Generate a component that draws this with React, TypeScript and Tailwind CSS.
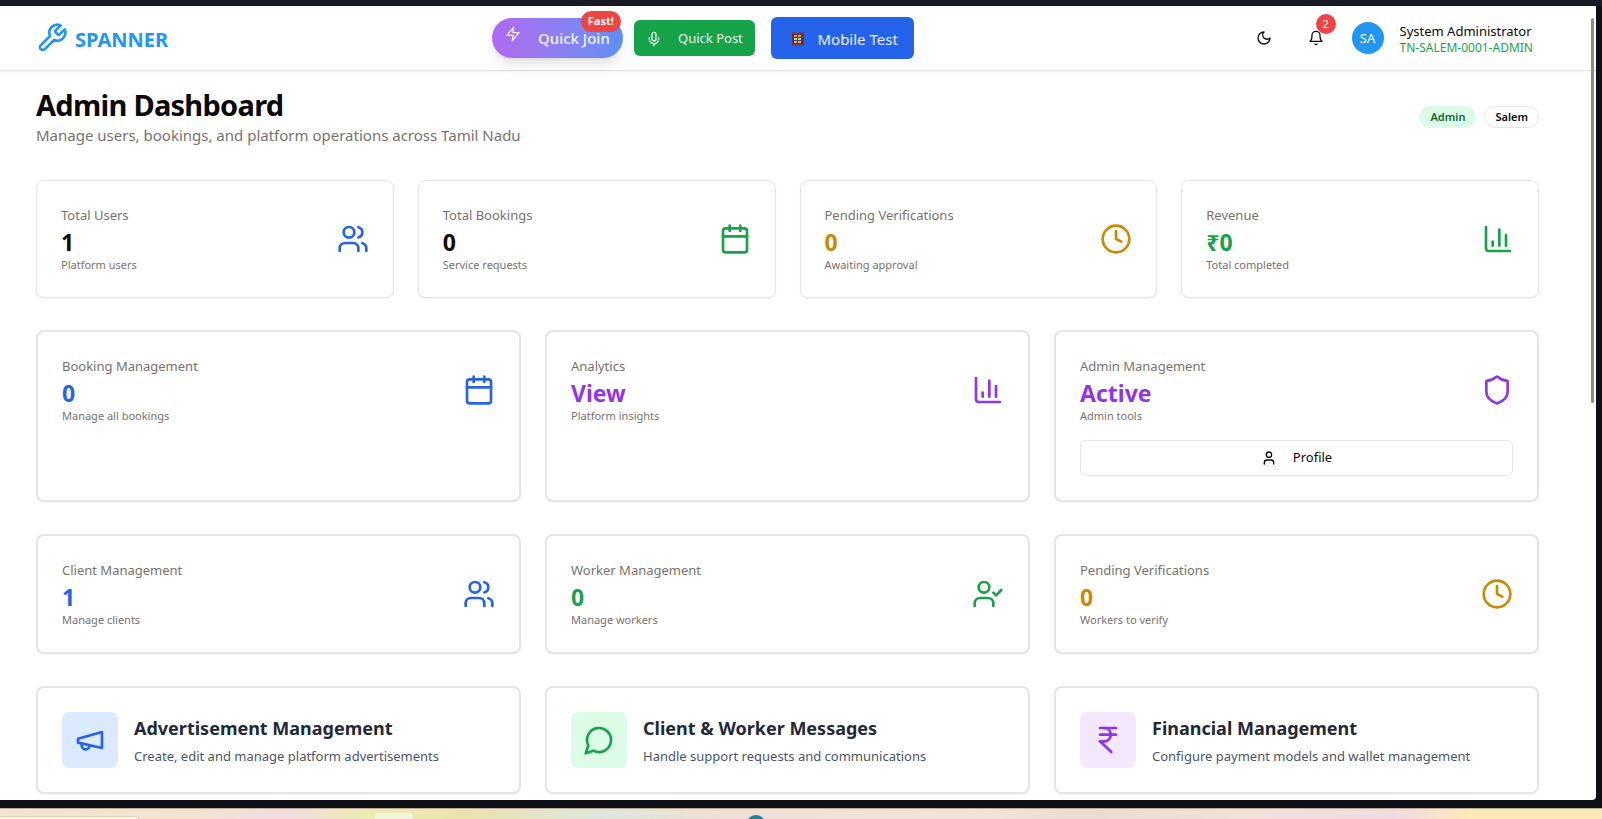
import React from "react";
import type { ReactNode } from "react";
import { Calendar, ChartColumn, Clock, IndianRupee, Mic, Shield, User, UserCheck, Users } from "lucide-react";

type IconProps = { className?: string };
type IconType = React.ComponentType<IconProps>;

type Stat = {
  label: string;
  value: string;
  note: string;
  icon: IconType;
  valueClass: string;
  iconClass: string;
  action?: string;
};

function Stroke({ className, children }: IconProps & { children: ReactNode }) {
  return (
    <svg
      className={className}
      viewBox="0 0 24 24"
      fill="none"
      stroke="currentColor"
      strokeWidth="2"
      strokeLinecap="round"
      strokeLinejoin="round"
      aria-hidden="true"
    >
      {children}
    </svg>
  );
}

function Wrench({ className }: IconProps) {
  return (
    <Stroke className={className}>
      <path d="M14.7 6.3a1 1 0 0 0 0 1.4l1.6 1.6a1 1 0 0 0 1.4 0l3.77-3.77a6 6 0 0 1-7.94 7.94l-6.91 6.91a2.12 2.12 0 0 1-3-3l6.91-6.91a6 6 0 0 1 7.94-7.94l-3.76 3.76z" />
    </Stroke>
  );
}

function Zap({ className }: IconProps) {
  return (
    <Stroke className={className}>
      <polygon points="13 2 3 14 12 14 11 22 21 10 12 10 13 2" />
    </Stroke>
  );
}

function Moon({ className }: IconProps) {
  return (
    <Stroke className={className}>
      <path d="M12 3a6 6 0 0 0 9 9 9 9 0 1 1-9-9Z" />
    </Stroke>
  );
}

function Bell({ className }: IconProps) {
  return (
    <Stroke className={className}>
      <path d="M6 8a6 6 0 0 1 12 0c0 7 3 9 3 9H3s3-2 3-9" />
      <path d="M10.3 21a1.94 1.94 0 0 0 3.4 0" />
    </Stroke>
  );
}

function Megaphone({ className }: IconProps) {
  return (
    <Stroke className={className}>
      <path d="m3 11 18-5v12L3 14v-3z" />
      <path d="M11.6 16.8a3 3 0 1 1-5.8-1.6" />
    </Stroke>
  );
}

function MessageCircle({ className }: IconProps) {
  return (
    <Stroke className={className}>
      <path d="M7.9 20A9 9 0 1 0 4 16.1L2 22Z" />
    </Stroke>
  );
}

function Abacus() {
  return (
    <svg className="ml-1 h-4 w-3.5" viewBox="0 0 14 16" aria-hidden="true">
      <rect x="2" y="2" width="10" height="12" fill="#4a3a6a" />
      <path d="M2 1v14M12 1v14" stroke="#5b2f4a" strokeWidth="2" />
      <path d="M1 2h12M1 14h12" stroke="#8a3a45" strokeWidth="1.5" />
      <g strokeWidth="2" strokeDasharray="3 1">
        <path d="M3 5h8" stroke="#f08a4b" />
        <path d="M3 8h8" stroke="#e8c75a" />
        <path d="M3 11h8" stroke="#e8a05a" />
      </g>
      <path d="M7 5h2M4 11h2" stroke="#6fc6d8" strokeWidth="2" />
    </svg>
  );
}

const totals: Stat[] = [
  { label: "Total Users", value: "1", note: "Platform users", icon: Users, valueClass: "text-[#0c0a09]", iconClass: "text-[#2563eb]" },
  { label: "Total Bookings", value: "0", note: "Service requests", icon: Calendar, valueClass: "text-[#0c0a09]", iconClass: "text-[#16a34a]" },
  { label: "Pending Verifications", value: "0", note: "Awaiting approval", icon: Clock, valueClass: "text-[#ca8a04]", iconClass: "text-[#ca8a04]" },
  { label: "Revenue", value: "₹0", note: "Total completed", icon: ChartColumn, valueClass: "text-[#16a34a]", iconClass: "text-[#16a34a]" },
];

const management: Stat[] = [
  { label: "Booking Management", value: "0", note: "Manage all bookings", icon: Calendar, valueClass: "text-[#2563eb]", iconClass: "text-[#2563eb]" },
  { label: "Analytics", value: "View", note: "Platform insights", icon: ChartColumn, valueClass: "text-[#9333ea]", iconClass: "text-[#9333ea]" },
  { label: "Admin Management", value: "Active", note: "Admin tools", icon: Shield, valueClass: "text-[#9333ea]", iconClass: "text-[#9333ea]", action: "Profile" },
];

const people: Stat[] = [
  { label: "Client Management", value: "1", note: "Manage clients", icon: Users, valueClass: "text-[#2563eb]", iconClass: "text-[#2563eb]" },
  { label: "Worker Management", value: "0", note: "Manage workers", icon: UserCheck, valueClass: "text-[#16a34a]", iconClass: "text-[#16a34a]" },
  { label: "Pending Verifications", value: "0", note: "Workers to verify", icon: Clock, valueClass: "text-[#ca8a04]", iconClass: "text-[#ca8a04]" },
];

const tools = [
  { title: "Advertisement Management", text: "Create, edit and manage platform advertisements", icon: Megaphone, tile: "bg-[#dbeafe] text-[#2563eb]" },
  { title: "Client & Worker Messages", text: "Handle support requests and communications", icon: MessageCircle, tile: "bg-[#dcfce7] text-[#16a34a]" },
  { title: "Financial Management", text: "Configure payment models and wallet management", icon: IndianRupee, tile: "bg-[#f3e8ff] text-[#9333ea]" },
];

function StatCard({ stat, frame }: { stat: Stat; frame: string }) {
  const Icon = stat.icon;
  return (
    <article className={`rounded-lg border-[#e5e5e5] bg-white p-6 shadow-xs ${frame}`}>
      <div className="flex items-center justify-between">
        <div>
          <p className="text-[13px] leading-5 text-[#78716c]">{stat.label}</p>
          <p className={`pt-0.5 text-[23px] leading-[30px] font-bold ${stat.valueClass}`}>{stat.value}</p>
          <p className="text-[11px] leading-4 text-[#78716c]">{stat.note}</p>
        </div>
        <Icon className={`size-8 ${stat.iconClass}`} aria-hidden="true" />
      </div>
      {stat.action && (
        <button className="mt-4 flex h-9 w-full items-center justify-center gap-4 rounded-md border border-[#e5e5e5] text-[13px] text-[#0c0a09]">
          <User className="size-4" aria-hidden="true" />
          {stat.action}
        </button>
      )}
    </article>
  );
}

function Header() {
  return (
    <header className="flex h-[65px] items-center justify-between border-b border-[#e5e5e5] pr-[63px] pl-9 shadow-xs">
      <a href="#home" className="flex items-center gap-[7px] text-xl font-bold text-[#2196f3]">
        <Wrench className="size-8" />
        <span className="pt-1">SPANNER</span>
      </a>

      <nav className="flex items-center" aria-label="Quick actions">
        <button className="relative flex h-10 w-[131px] items-center justify-between rounded-full bg-linear-to-r from-[#b069f0] to-[#5b90f4] px-[13px] text-[15px] font-medium text-white/90 shadow-lg">
          <Zap className="mb-2 size-4" />
          Quick Join
          <span className="absolute -top-[7px] right-0.5 flex h-[21px] items-center rounded-full bg-[#ef4444] px-[7px] text-[11px] font-bold text-white">
            Fast!
          </span>
        </button>
        <button className="ml-[11px] flex h-9 w-[121px] items-center justify-between rounded-md bg-[#16a34a] px-3 pt-0.5 text-[13px] text-white/90">
          <Mic className="size-4" aria-hidden="true" />
          Quick Post
        </button>
        <button className="ml-4 flex h-[42px] w-[143px] items-center justify-between rounded-md bg-[#2563eb] px-4 pt-0.5 text-[15px] text-white/90">
          <Abacus />
          Mobile Test
        </button>
      </nav>

      <div className="flex items-center pl-2 text-[#0c0a09]">
        <button aria-label="Toggle dark mode" className="flex size-9 items-center justify-center">
          <Moon className="size-4" />
        </button>
        <button aria-label="Notifications" className="relative ml-4 flex size-9 items-center justify-center">
          <Bell className="size-4" />
          <span className="absolute -top-1.5 -right-0.5 flex size-5 items-center justify-center rounded-full bg-[#ef4444] pt-px text-[11px] text-white">
            2
          </span>
        </button>
        <button className="ml-[18px] flex items-center gap-4 text-left">
          <span className="flex size-8 items-center justify-center rounded-full bg-[#2196f3] pt-px text-[13px] text-white">SA</span>
          <span className="flex flex-col pt-0.5">
            <span className="text-[13px] leading-[18px]">System Administrator</span>
            <span className="text-xs leading-4 text-[#16a34a]">TN-SALEM-0001-ADMIN</span>
          </span>
        </button>
      </div>
    </header>
  );
}

export default function App() {
  return (
    <div className="flex h-screen flex-col overflow-hidden bg-[#0f1016] font-['Noto_Sans','Open_Sans',sans-serif] text-[#0c0a09]">
      <div className="h-1.5 shrink-0 bg-[#181a25]" />
      <div className="relative mr-1.5 min-h-0 flex-1 overflow-hidden rounded-br-sm bg-white">
        <Header />
        <main className="flex flex-col gap-8 pt-4 pr-[57px] pl-9">
          <div className="flex items-center justify-between pb-px">
            <div>
              <h1 className="text-[29px] leading-9 font-bold tracking-tight">Admin Dashboard</h1>
              <p className="text-[15px] leading-6 text-[#78716c]">Manage users, bookings, and platform operations across Tamil Nadu</p>
            </div>
            <div className="flex gap-2 text-[11px] font-semibold">
              <span className="flex h-[22px] items-center rounded-full bg-[#dcfce7] px-[11px] text-[#166534]">Admin</span>
              <span className="flex h-[22px] items-center rounded-full border border-[#e5e5e5] px-2.5">Salem</span>
            </div>
          </div>

          <section className="grid grid-cols-4 gap-6">
            {totals.map((stat) => (
              <StatCard key={stat.label} stat={stat} frame="border" />
            ))}
          </section>
          <section className="grid grid-cols-3 gap-6">
            {management.map((stat) => (
              <StatCard key={stat.label} stat={stat} frame="border-2" />
            ))}
          </section>
          <section className="grid grid-cols-3 gap-6">
            {people.map((stat) => (
              <StatCard key={stat.label} stat={stat} frame="border-2" />
            ))}
          </section>
          <section className="grid grid-cols-3 gap-6">
            {tools.map(({ title, text, icon: Icon, tile }) => (
              <article key={title} className="flex items-center gap-4 rounded-lg border-2 border-[#e5e5e5] bg-white p-6 shadow-xs">
                <div className={`rounded-lg p-3 ${tile}`}>
                  <Icon className="size-8" />
                </div>
                <div>
                  <h2 className="text-lg leading-7 font-bold text-[#1f2937]">{title}</h2>
                  <p className="mt-1 text-[13px] leading-5 text-[#4b5563]">{text}</p>
                </div>
              </article>
            ))}
          </section>
        </main>
        <div className="absolute top-3 right-0.5 h-[385px] w-[3px] rounded-full bg-[#8b8b8b]" />
      </div>
      <div className="relative mt-2 h-[11px] shrink-0 overflow-hidden border-t border-[#b9ab98] bg-[linear-gradient(90deg,#f5e3cc_0%,#f4e1d0_12%,#f3dbe2_18%,#e9ecb0_23%,#ece3ae_29%,#dce6da_37%,#efdfd6_45%,#f3e2da_62%,#eadbd5_67%,#f2e0da_78%,#f1d9e2_87%,#fde9b8_92%,#fde9b8_100%)]">
        <div className="absolute top-[7px] -left-2 h-4 w-[150px] rounded-lg border border-[#e6cfb3] bg-[#fdf6ec]" />
        <div className="absolute top-1 left-[375px] h-4 w-[38px] rounded bg-[#f2f5dc]" />
        <div className="absolute top-1.5 left-[746px] size-5 rounded-full bg-[#238593]" />
      </div>
    </div>
  );
}
